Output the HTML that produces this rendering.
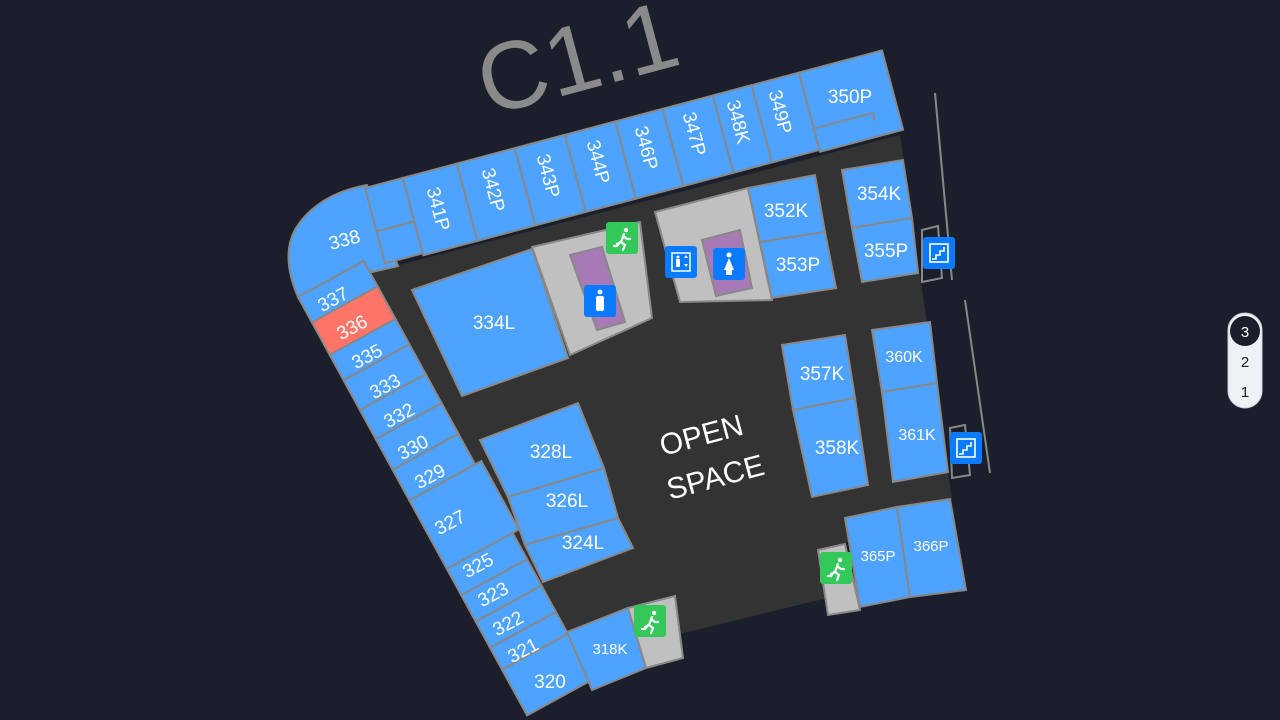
<!DOCTYPE html>
<html><head><meta charset="utf-8"><style>
html,body{margin:0;padding:0;background:#1b1f2b;width:1280px;height:720px;overflow:hidden}
svg{display:block}
text{font-family:"Liberation Sans",sans-serif;fill:#fff}
</style></head><body>
<svg width="1280" height="720" viewBox="0 0 1280 720">
<rect width="1280" height="720" fill="#1b1f2b"/>
<text x="0" y="0" font-size="96" transform="translate(488,116) rotate(-15)" style="fill:#8a8a8a">C1.1</text>
<!-- floor -->
<polygon points="372,272 900,135 952,500 840,545 860,590 655,640 590,640 515,660 372,272" fill="#333333"/>
<g stroke="#888" stroke-width="2" fill="#4da3ff">
<path d="M367,185 L398,266 L372,272 L366,268 L298,297 Q280,255 296,228 Q318,194 367,185 Z"/>
<g transform="translate(365,188) rotate(-14.9)">
<rect x="0" y="0" width="39" height="45"/><rect x="0" y="45" width="39" height="33"/>
<rect x="39" y="0" width="56" height="80"/><rect x="95" y="0" width="60" height="80"/>
<rect x="155" y="0" width="52" height="80"/><rect x="207" y="0" width="52" height="80"/>
<rect x="259" y="0" width="49" height="80"/><rect x="308" y="0" width="52" height="80"/>
<rect x="360" y="0" width="40" height="80"/><rect x="400" y="0" width="49" height="80"/>
<rect x="449" y="0" width="86" height="82"/>
<path d="M449,58 L510,58 L510,66" fill="none"/>
</g>
<g transform="translate(298,297) rotate(61.3)">
<rect x="0" y="-75" width="29" height="75"/>
<rect x="29" y="-75" width="37" height="75" fill="#ff7468"/>
<rect x="66" y="-75" width="29" height="75"/><rect x="95" y="-75" width="34" height="75"/>
<rect x="129" y="-75" width="33" height="75"/><rect x="162" y="-75" width="35" height="75"/>
<rect x="197" y="-75" width="35" height="75"/><rect x="232" y="-82" width="78" height="82"/>
<rect x="310" y="-75" width="30" height="75"/><rect x="340" y="-75" width="30" height="75"/>
<rect x="370" y="-75" width="30" height="75"/><rect x="400" y="-75" width="25" height="75"/>
<rect x="425" y="-90" width="52" height="90"/>
</g>
<polygon points="412,290 532,249 568,358 462,396"/>
<polygon points="532,247 640,222 652,318 570,355" fill="#c0c0c0"/>
<polygon points="570,255 602,247 625,322 597,330" fill="#a87ab5"/>
<polygon points="655,212 748,188 772,300 680,302" fill="#c0c0c0"/>
<polygon points="702,240 740,230 752,288 716,296" fill="#a87ab5"/>
<polygon points="748,188 815,175 825,232 760,242"/>
<polygon points="760,242 825,232 836,288 772,298"/>
<polygon points="842,170 903,160 912,218 852,228"/>
<polygon points="852,228 912,218 918,273 862,282"/>
<polygon points="782,345 845,335 855,398 793,410"/>
<polygon points="793,410 855,398 868,485 812,497"/>
<polygon points="872,330 930,322 937,383 882,392"/>
<polygon points="882,392 937,383 948,472 893,482"/>
<polygon points="818,550 845,544 860,610 828,615" fill="#c0c0c0"/>
<polygon points="845,518 897,507 910,597 860,607"/>
<polygon points="897,507 950,499 966,590 910,597"/>
<polygon points="480,440 578,403 604,468 508,497"/>
<polygon points="508,497 604,468 618,518 525,545"/>
<polygon points="525,545 618,518 633,548 543,582"/>
<polygon points="567,632 628,608 646,668 592,690"/>
<polygon points="628,608 675,596 683,658 646,668" fill="#c0c0c0"/>
</g>
<g stroke="#888" stroke-width="2" fill="none">
<path d="M935,93 L952,280"/><path d="M965,300 L990,473"/>
<path d="M922,230 L938,226 L942,278 L922,282 Z"/>
<path d="M950,428 L965,425 L970,475 L952,478 Z"/>
</g>
<g font-size="19" text-anchor="middle">
<text transform="translate(346,246) rotate(-15)">338</text>
<text transform="translate(438,209) rotate(75)" x="0" y="6">341P</text>
<text transform="translate(493,190) rotate(75)" x="0" y="6">342P</text>
<text transform="translate(548,176) rotate(75)" x="0" y="6">343P</text>
<text transform="translate(598,162) rotate(75)" x="0" y="6">344P</text>
<text transform="translate(646,148) rotate(75)" x="0" y="6">346P</text>
<text transform="translate(694,134) rotate(75)" x="0" y="6">347P</text>
<text transform="translate(738,122) rotate(75)" x="0" y="6">348K</text>
<text transform="translate(780,112) rotate(75)" x="0" y="6">349P</text>
<text transform="translate(850,103)">350P</text>
<text transform="translate(336,305) rotate(-28)">337</text>
<text transform="translate(355,333) rotate(-28)">336</text>
<text transform="translate(370,362) rotate(-28)">335</text>
<text transform="translate(388,392) rotate(-28)">333</text>
<text transform="translate(402,421) rotate(-28)">332</text>
<text transform="translate(416,453) rotate(-28)">330</text>
<text transform="translate(433,482) rotate(-28)">329</text>
<text transform="translate(453,528) rotate(-28)">327</text>
<text transform="translate(481,571) rotate(-28)">325</text>
<text transform="translate(496,600) rotate(-28)">323</text>
<text transform="translate(511,629) rotate(-28)">322</text>
<text transform="translate(526,656) rotate(-28)">321</text>
<text transform="translate(550,688)">320</text>
<text transform="translate(494,329)">334L</text>
<text transform="translate(786,217)">352K</text>
<text transform="translate(798,271)">353P</text>
<text transform="translate(879,200)">354K</text>
<text transform="translate(886,257)">355P</text>
<text transform="translate(822,380)">357K</text>
<text transform="translate(837,454)">358K</text>
<text font-size="16" transform="translate(904,362)">360K</text>
<text font-size="16" transform="translate(917,440)">361K</text>
<text font-size="15" transform="translate(878,561)">365P</text>
<text font-size="15" transform="translate(931,551)">366P</text>
<text transform="translate(551,458)">328L</text>
<text transform="translate(567,507)">326L</text>
<text transform="translate(583,549)">324L</text>
<text font-size="15" transform="translate(610,654)">318K</text>
<text font-size="30" transform="translate(704,445) rotate(-15)">OPEN</text>
<text font-size="30" transform="translate(718,487) rotate(-15)">SPACE</text>
</g>
<g>
<rect x="606" y="222" width="32" height="32" rx="3" fill="#34c759"/>
<rect x="634" y="605" width="32" height="32" rx="3" fill="#34c759"/>
<rect x="820" y="552" width="32" height="32" rx="3" fill="#34c759"/>
<g fill="none" stroke="#fff" stroke-width="2.2" stroke-linecap="round">
<path d="M624,234 l-3,8 l4,3 l-2,5 M621,242 l-4,2 M623,236 l4,3 l3,0 M620,242 l-3,4 l-3,0"/>
<path d="M652,617 l-3,8 l4,3 l-2,5 M649,625 l-4,2 M651,619 l4,3 l3,0 M648,625 l-3,4 l-3,0"/>
<path d="M838,564 l-3,8 l4,3 l-2,5 M835,572 l-4,2 M837,566 l4,3 l3,0 M834,572 l-3,4 l-3,0"/>
</g>
<g fill="#fff"><circle cx="626" cy="230" r="2.2"/><circle cx="654" cy="613" r="2.2"/><circle cx="840" cy="560" r="2.2"/></g>
<rect x="584" y="285" width="32" height="32" rx="3" fill="#0a7bff"/>
<circle cx="600" cy="292" r="2.5" fill="#fff"/><rect x="596" y="296" width="8" height="15" rx="2" fill="#fff"/>
<rect x="713" y="248" width="32" height="32" rx="3" fill="#0a7bff"/>
<circle cx="729" cy="255" r="2.5" fill="#fff"/><path d="M729,258 l5,12 l-10,0 z M726,270 h6 v5 h-6z" fill="#fff"/>
<rect x="665" y="246" width="32" height="32" rx="3" fill="#0a7bff"/>
<rect x="672" y="253" width="18" height="18" fill="none" stroke="#fff" stroke-width="1.5"/>
<circle cx="678" cy="257" r="1.5" fill="#fff"/><rect x="676" y="259" width="4" height="8" fill="#fff"/>
<path d="M684,258 l2,-3 l2,3z M684,264 l2,3 l2,-3z" fill="#fff"/>
<rect x="923" y="237" width="32" height="32" rx="3" fill="#0a7bff"/>
<rect x="950" y="432" width="32" height="32" rx="3" fill="#0a7bff"/>
<g fill="none" stroke="#fff" stroke-width="1.6">
<rect x="930" y="244" width="18" height="18"/><path d="M932,259 h4 v-4 h4 v-4 h4 v-4"/>
<rect x="957" y="439" width="18" height="18"/><path d="M959,454 h4 v-4 h4 v-4 h4 v-4"/>
</g>
</g>
<rect x="1228" y="313" width="34" height="95" rx="17" fill="#eef2f7" stroke="#ccd" stroke-width="1"/>
<circle cx="1245" cy="331" r="15" fill="#1b1f2b"/>
<g font-size="15" text-anchor="middle">
<text x="1245" y="337">3</text>
<text x="1245" y="367" style="fill:#1b1f2b">2</text>
<text x="1245" y="397" style="fill:#1b1f2b">1</text>
</g>
</svg>
</body></html>
